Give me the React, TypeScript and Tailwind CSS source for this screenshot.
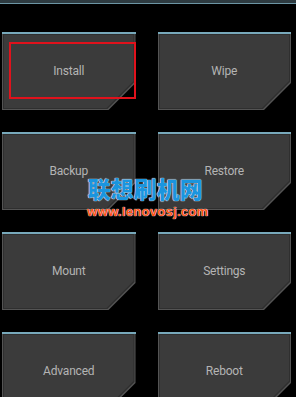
import React from 'react';

const buttons = ['Install', 'Wipe', 'Backup', 'Restore', 'Mount', 'Settings', 'Advanced', 'Reboot'];

// cut bottom-right corner, like the recovery tiles
const cut = '[clip-path:polygon(0_0,100%_0,100%_calc(100%-27px),calc(100%-27px)_100%,0_100%)]';

function Tile({ label }: { label: string }) {
  return (
    <div className="flex flex-col h-[78px]">
      <div className="h-[2px] bg-[#78a9bb] shrink-0" />
      <div className={`flex-1 flex bg-[#545454] p-px pt-0 ${cut}`}>
        <div className={`flex-1 flex bg-[#2f2f2f] p-px ${cut}`}>
          <div className={`flex-1 flex items-center justify-center bg-[#3b3b3b] ${cut}`}>
            <span className="text-[12px] text-[#b4b4b4] tracking-[-0.2px] font-['Roboto',sans-serif] -mt-[1px]">
              {label}
            </span>
          </div>
        </div>
      </div>
    </div>
  );
}

export default function App() {
  return (
    <div className="relative w-[296px] h-[397px] overflow-hidden bg-black">
      {/* status strip */}
      <div className="h-[3px] bg-[#2d3a40]" />
      <div className="h-px bg-[#6c95a4]" />

      <div className="grid grid-cols-2 gap-x-[22px] gap-y-[22px] pl-[2px] pr-[5px] pt-[28px]">
        {buttons.map(b => (
          <Tile key={b} label={b} />
        ))}
      </div>

      {/* selection highlight */}
      <div className="absolute left-[9px] top-[42px] w-[127px] h-[57px] border-2 border-[#e0121c]" />

      {/* watermark */}
      <div className="absolute left-0 right-0 top-[177px] flex flex-col items-center">
        <div className="ml-[-6px] text-[23px] leading-[23px] font-black text-[#1b95de] font-['Noto_Sans_CJK_SC',sans-serif] [text-shadow:0_0_1px_#fff,0_0_1px_#fff]">
          联想刷机网
        </div>
        <div className="mt-[6px] text-[13px] leading-[12px] font-bold text-[#ff5214] tracking-[0.3px] font-['Liberation_Sans',sans-serif] [text-shadow:0_0_1px_#fff,0_0_1px_#fff]">
          www.lenovosj.com
        </div>
      </div>
    </div>
  );
}
